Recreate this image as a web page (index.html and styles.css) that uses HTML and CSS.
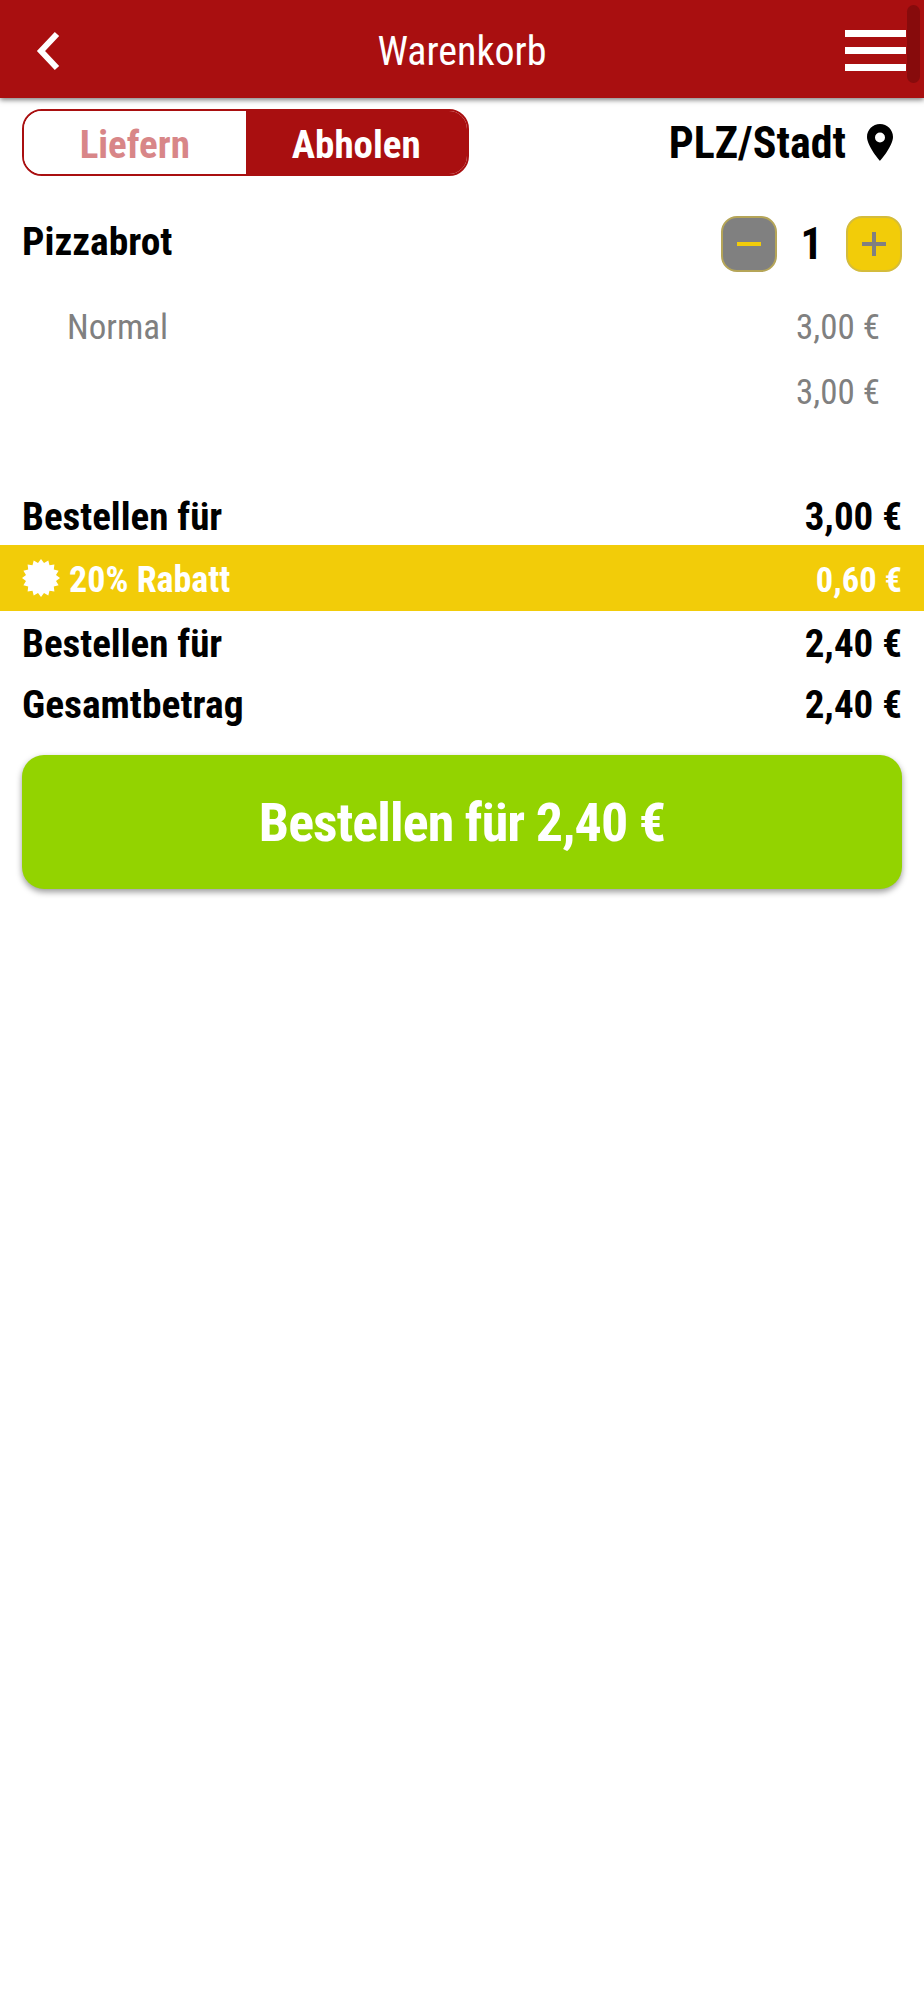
FILE: index.html
```html
<!DOCTYPE html>
<html lang="de">
<head>
<meta charset="utf-8">
<title>Warenkorb</title>
<link rel="stylesheet" href="styles.css">
</head>
<body>
<header class="topbar">
  <svg class="back" viewBox="0 0 26 40" width="26" height="40"><path d="M22 3 L6 20 L22 37" fill="none" stroke="#fff" stroke-width="6"/></svg>
  <h1 class="title">Warenkorb</h1>
  <div class="burger"><span></span><span></span><span></span></div>
  <div class="thumb"></div>
</header>
<main class="content">
  <div class="modebar">
    <div class="segment">
      <div class="seg seg-off">Liefern</div>
      <div class="seg seg-on">Abholen</div>
    </div>
    <div class="place">
      <span>PLZ/Stadt</span>
      <svg viewBox="0 0 26 37" width="26" height="37"><path fill-rule="evenodd" d="M13 0C5.800 0 0 5.800 0 13c0 9 13 24 13 24s13-15 13-24C26 5.800 20.200 0 13 0zm0 8.500a5 5 0 1 1 0 10 5 5 0 0 1 0-10z"/></svg>
    </div>
  </div>
  <div class="item">
    <div class="item-name">Pizzabrot</div>
    <div class="stepper">
      <div class="step step-minus"><i class="bar"></i></div>
      <div class="qty">1</div>
      <div class="step step-plus"><i class="bar"></i><i class="bar bar-v"></i></div>
    </div>
  </div>
  <div class="sub"><span>Normal</span><span>3,00 €</span></div>
  <div class="sub sub-total"><span></span><span>3,00 €</span></div>
  <div class="line line-first"><span>Bestellen für</span><span>3,00 €</span></div>
  <div class="discount">
    <div class="discount-label">
      <svg viewBox="-19 -19 38 38" width="38" height="38"><polygon fill="#fff" points="19,0 15,3 17.600,7.300 12.800,8.500 13.400,13.400 8.500,12.800 7.300,17.600 3,15 0,19 -3,15 -7.300,17.600 -8.500,12.800 -13.400,13.400 -12.800,8.500 -17.600,7.300 -15,3 -19,0 -15,-3 -17.600,-7.300 -12.800,-8.500 -13.400,-13.400 -8.500,-12.800 -7.300,-17.600 -3,-15 0,-19 3,-15 7.300,-17.600 8.500,-12.800 13.400,-13.400 12.800,-8.500 17.600,-7.300 15,-3"/></svg>
      <span class="discount-name">20% Rabatt</span>
    </div>
    <span class="discount-amount">0,60 €</span>
  </div>
  <div class="line line-after"><span>Bestellen für</span><span>2,40 €</span></div>
  <div class="line line-total"><span class="total-name">Gesamtbetrag</span><span>2,40 €</span></div>
  <button class="order">Bestellen für 2,40 €</button>
</main>
</body>
</html>
```
FILE: styles.css
```css
* { box-sizing: border-box; }
html, body { margin: 0; padding: 0; background: #fff; }
body {
  font-family: "Roboto Condensed", Roboto, "Liberation Sans Narrow", sans-serif;
  font-stretch: 75%;
  color: #000;
  width: 924px;
  height: 2000px;
  overflow: hidden;
}
.topbar {
  height: 98px;
  background: #a90f10;
  box-shadow: 0 2px 5px rgba(0,0,0,.5);
  display: flex;
  align-items: center;
  justify-content: center;
  position: relative;
}
.back { position: absolute; left: 35px; top: 31px; }
.title { margin: 0; padding-top: 5px; font-size: 40px; font-weight: 400; color: #fff; }
.burger { position: absolute; left: 845px; top: 30px; width: 61px; display: flex; flex-direction: column; gap: 10px; }
.burger span { height: 7px; background: #fff; display: block; }
.thumb { position: absolute; left: 907px; top: 5px; width: 13px; height: 78px; border-radius: 7px; background: #870b0c; }
.content { display: flex; flex-direction: column; }
.modebar { display: flex; justify-content: space-between; align-items: center; padding: 11px 22px 0; }
.segment {
  width: 447px; height: 67px; display: flex;
  border: 2px solid #a90f10; border-radius: 20px; overflow: hidden;
}
.seg { flex: 1 1 50%; display: flex; align-items: center; justify-content: center; padding-top: 4px; font-size: 39px; font-weight: 700; }
.seg-off { color: #d88688; background: #fff; }
.seg-on { color: #fff; background: #a90f10; }
.place { display: flex; align-items: center; gap: 21px; font-size: 44px; font-weight: 700; padding-right: 9px; }
.item { display: flex; justify-content: space-between; align-items: flex-start; padding: 40px 22px 0; }
.item-name { font-size: 39.500px; font-weight: 700; line-height: 52px; }
.stepper { display: flex; align-items: center; }
.step { width: 56px; height: 56px; border-radius: 16px; position: relative; }
.step-minus { background: #808080; border: 2px solid #b5a558; }
.step-plus { background: #f2cc09; border: 2px solid #d4bc3c; }
.qty { width: 69px; text-align: center; font-size: 44px; font-weight: 700; }
.bar { position: absolute; left: 50%; top: 50%; width: 24px; height: 4px; margin: -2px 0 0 -12px; background: #f2cc09; }
.step-plus .bar { background: #808080; }
.step-plus .bar-v { width: 4px; height: 24px; margin: -12px 0 0 -2px; }
.sub { display: flex; justify-content: space-between; padding: 34px 44px 0 67px; font-size: 35px; line-height: 44px; color: #808080; }
.sub-total { padding-top: 21px; }
.line { display: flex; justify-content: space-between; padding: 0 22px; font-size: 39px; font-weight: 700; line-height: 52px; }
.line-first { margin-top: 76px; }
.line-total { margin-top: 9px; }
.total-name { font-size: 39.500px; }
.discount {
  height: 66px; margin-top: 2px; background: #f2cc09; color: #fff;
  display: flex; justify-content: space-between; align-items: center;
  padding: 3px 22px 0; font-size: 34.500px; font-weight: 700;
}
.discount-label { display: flex; align-items: center; gap: 9px; }
.discount-label svg { margin-top: -3px; }
.discount-name { font-size: 36px; }
.line-after { margin-top: 7px; }
.order {
  margin: 24px 22px 0; height: 134px; border: 0; border-radius: 22px;
  background: #93d300; color: #fff; font: inherit; font-size: 54px; font-weight: 700; letter-spacing: -0.900px;
  box-shadow: 0 3px 6px rgba(0,0,0,.4);
}
```
